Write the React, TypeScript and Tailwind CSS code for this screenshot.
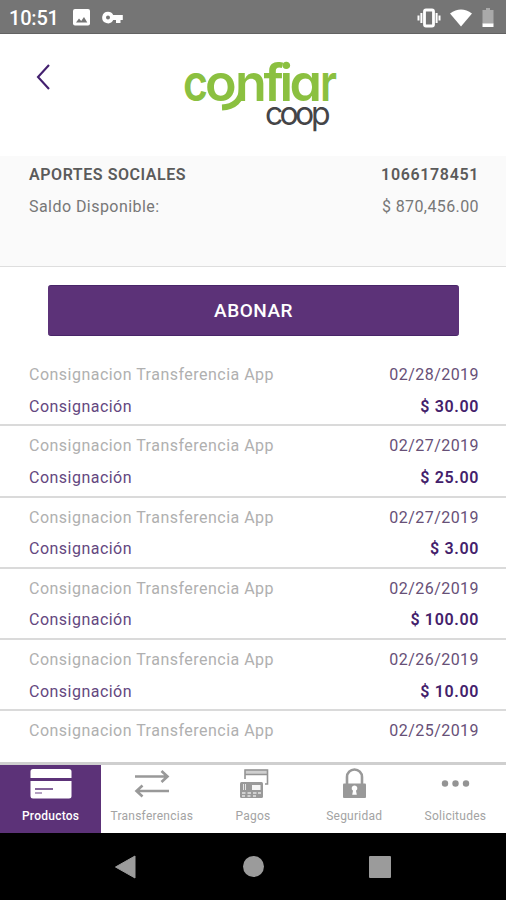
import type { ReactNode } from "react"

const movements = [
  { date: "02/28/2019", amount: "$ 30.00" },
  { date: "02/27/2019", amount: "$ 25.00" },
  { date: "02/27/2019", amount: "$ 3.00" },
  { date: "02/26/2019", amount: "$ 100.00" },
  { date: "02/26/2019", amount: "$ 10.00" },
  { date: "02/25/2019", amount: "" },
]

function StatusBar() {
  return (
    <div className="flex h-[34px] shrink-0 items-center justify-between border-b border-[#626262] bg-[#757575] pl-[9px] pr-[12px] text-white">
      <div className="flex items-center pt-[2px]">
        <span className="w-[64px] text-[20px] font-medium leading-none tracking-[-0.2px]">10:51</span>
        <svg width="17" height="17" viewBox="0 0 17 17">
          <rect width="17" height="16.5" rx="2" fill="#fff" />
          <path d="M3 13.5 6 9.5l2.2 2.5L11 8l3.3 5.5z" fill="#757575" />
        </svg>
        <svg className="ml-[12px]" width="21" height="13" viewBox="0 0 21 13">
          <path
            fillRule="evenodd"
            fill="#fff"
            d="M6 0.7a5.8 5.8 0 1 0 5.2 8.4H14V12h4.5V9.1h2.3V4H11.2A5.8 5.8 0 0 0 6 .7zM6 4.6a2 2 0 1 1 0 4 2 2 0 0 1 0-4z"
          />
        </svg>
      </div>
      <div className="flex items-center pt-[2px]">
        <svg width="24" height="20" viewBox="0 0 24 20" fill="none" stroke="#fff" strokeWidth="2">
          <rect x="7.5" y="2" width="9" height="16" rx="1.5" strokeWidth="2.8" />
          <path d="M4.4 5v10M1.5 7.5v5M19.6 5v10M22.5 7.5v5" />
        </svg>
        <svg className="ml-[8px]" width="24" height="18" viewBox="0 0 24 18">
          <path d="M1 4.5Q12-3.5 23 4.5L12 17.5z" fill="#fff" />
        </svg>
        <svg className="ml-[9px]" width="12" height="20" viewBox="0 0 12 20">
          <path d="M4 0h4v2h3.5v14H.5V2H4z" fill="#a9a9a9" />
          <path d="M.5 15.5h11V19H.5z" fill="#fff" />
        </svg>
      </div>
    </div>
  )
}

function Logo() {
  return (
    <svg
      width="156"
      height="80"
      viewBox="0 0 156 80"
      className="overflow-visible font-['Inter',sans-serif] [font-feature-settings:'cv11','ss03']"
    >
      <text fill="#8bc040" fontSize="52" fontWeight="600" y="42">
        <tspan x="1" textLength="25" lengthAdjust="spacingAndGlyphs">c</tspan>
        <tspan x="23">o</tspan>
        <tspan x="53">n</tspan>
        <tspan x="81.5">f</tspan>
        <tspan x="97.5">i</tspan>
        <tspan x="107.5">a</tspan>
        <tspan x="138" textLength="17" lengthAdjust="spacingAndGlyphs">r</tspan>
      </text>
      {/* tail that runs from the n back under the o */}
      <path d="M40 48.500C52 48 59.500 41 60 30" fill="none" stroke="#8bc040" strokeWidth="6" />
      <text fill="#454547" fontSize="32" fontWeight="400" y="66" x="83 97.500 113 129">
        coop
      </text>
    </svg>
  )
}

function Header() {
  return (
    <header className="flex h-[122px] shrink-0 items-start bg-white">
      <svg className="ml-[35px] mt-[28px]" width="16" height="30" viewBox="0 0 16 30" fill="none">
        <path d="M14 3 3 15l11 12" stroke="#43206f" strokeWidth="2.1" />
      </svg>
      <div className="ml-[131px] mt-[25px]">
        <Logo />
      </div>
    </header>
  )
}

function AccountSummary() {
  return (
    <section className="h-[111px] shrink-0 border-b border-[#dedede] bg-[#fafafa] pl-[29px] pr-[27px] pt-[3px] text-[16px] leading-[31.5px]">
      <div className="flex justify-between font-semibold text-[#5b5b5b]">
        <span className="tracking-[0.55px]">APORTES SOCIALES</span>
        <span className="tracking-[0.65px]">1066178451</span>
      </div>
      <div className="flex justify-between text-[#777]">
        <span className="tracking-[0.45px]">Saldo Disponible:</span>
        <span className="tracking-[0.4px]">$ 870,456.00</span>
      </div>
    </section>
  )
}

function Tab({ label, active, children }: { label: string; active?: boolean; children: ReactNode }) {
  return (
    <button
      className={`flex flex-1 flex-col items-center ${
        active ? "bg-[#5c3278] font-medium text-white" : "text-[#a3a3a3]"
      }`}
    >
      <svg width="50" height="38" viewBox="0 0 50 38" fill="none">
        {children}
      </svg>
      <span className="mt-[5px] text-[12px] leading-[16px] tracking-[0.25px]">{label}</span>
    </button>
  )
}

function TabBar() {
  return (
    <nav className="flex h-[71px] shrink-0 border-t-[3px] border-[#cfcfcf] bg-white">
      <Tab label="Productos" active>
        <path d="M4.5 13V6.5A2.5 2.5 0 0 1 7 4h36a2.5 2.5 0 0 1 2.5 2.5V13z" fill="#fff" />
        <path d="M4.5 16h41v15a2.5 2.5 0 0 1-2.5 2.5H7A2.5 2.5 0 0 1 4.5 31z" fill="#fff" />
        <path d="M9 24h18" stroke="#5c3278" strokeWidth="1.5" />
        <path d="M9 28h7" stroke="#9b82ad" strokeWidth="1.5" />
      </Tab>
      <Tab label="Transferencias">
        <path d="M8 11.5h33M34.5 6l6 5.5-6 5.5M42 26H9M15.5 20.5 9.500 26l6 5.5" stroke="#999" strokeWidth="2.6" />
      </Tab>
      <Tab label="Pagos">
        <path d="M17 4.5h22.5V9H17z" fill="#cfcfcf" />
        <path d="M17 14V5h22.5v14H37M17 9.5h22" stroke="#949494" strokeWidth="1.6" />
        <rect x="12" y="17" width="23" height="16" rx="1.5" fill="#999" />
        <path d="M15.5 19v6M17.5 19v6" stroke="#e4e4e4" strokeWidth="1" />
        <path d="M24 20h8.5v5H24z" fill="#f4f4f4" />
        <path d="M14 28h3.5M19.5 28H23M25 28h3.5M30 28h3M14 31h3M19.5 31h3M25 31h3" stroke="#e4e4e4" strokeWidth="1.3" />
      </Tab>
      <Tab label="Seguridad">
        <path d="M18 19v-7a7.5 7.5 0 0 1 15 0v7" stroke="#999" strokeWidth="2.6" />
        <rect x="14" y="18.5" width="23" height="14.5" rx="1" fill="#999" />
        <path d="M25.5 20.500a2.800 2.800 0 0 1 1.500 5.200l.8 4h-4.600l.8-4a2.800 2.800 0 0 1 1.500-5.200z" fill="#fff" />
      </Tab>
      <Tab label="Solicitudes">
        <circle cx="15" cy="18.5" r="3.2" fill="#949494" />
        <circle cx="25.5" cy="18.5" r="3.2" fill="#949494" />
        <circle cx="36" cy="18.5" r="3.2" fill="#949494" />
      </Tab>
    </nav>
  )
}

function SystemNav() {
  return (
    <div className="flex h-[67px] shrink-0 items-center justify-center gap-[105px] bg-black pr-[2px]">
      <svg width="24" height="24" viewBox="0 0 24 24">
        <path d="M1.5 12 21 1v22z" fill="#9b9b9b" stroke="#9b9b9b" strokeLinejoin="round" />
      </svg>
      <div className="h-[21px] w-[21px] rounded-full bg-[#9b9b9b]" />
      <div className="h-[22px] w-[22px] rounded-[1px] bg-[#9b9b9b]" />
    </div>
  )
}

export default function App() {
  return (
    <div className="flex h-[900px] w-[506px] flex-col overflow-hidden bg-white font-['Roboto',sans-serif]">
      <StatusBar />
      <Header />
      <AccountSummary />

      <main className="min-h-0 flex-1 overflow-hidden">
        <button className="mx-[48px] mt-[18px] block h-[51px] w-[411px] rounded-[3px] border-y border-[#482568] bg-[#5c3278] pt-[2px] text-[19px] font-medium tracking-[0.5px] text-white">
          ABONAR
        </button>

        <ul className="mt-[19px]">
          {movements.map((item, i) => (
            <li
              key={i}
              className="h-[71.25px] border-b-2 border-[#dadada] pl-[29px] pr-[27px] pt-[4px] text-[16px] leading-[31.5px]"
            >
              <div className="flex justify-between">
                <span className="tracking-[0.48px] text-[#b0b0b0]">Consignacion Transferencia App</span>
                <span className="tracking-[0.45px] text-[#675077]">{item.date}</span>
              </div>
              <div className="flex justify-between">
                {item.amount && <span className="tracking-[0.48px] text-[#644780]">Consignación</span>}
                <span className="font-semibold tracking-[0.65px] text-[#43206b]">{item.amount}</span>
              </div>
            </li>
          ))}
        </ul>
      </main>

      <TabBar />
      <SystemNav />
    </div>
  )
}
